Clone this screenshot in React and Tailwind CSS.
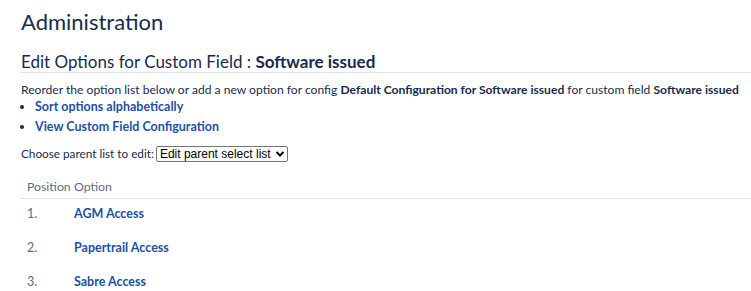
export default function App() {
  const font = { fontFamily: 'Lato, "Open Sans", sans-serif' };
  const rows = ["AGM Access", "Papertrail Access", "Sabre Access"];
  return (
    <div className="w-[751px] h-[291px] overflow-hidden bg-white text-[#172b4d]" style={font}>
      <div className="pl-[20px]">
        <h1 className="pt-[6px] pl-[1px] text-[22px] leading-[32px] font-normal">Administration</h1>
        <h2 className="mt-[13px] pl-[1px] text-[17px] leading-[21px] border-b border-[#dfe1e6] font-normal">
          Edit Options for Custom Field : <b className="font-bold">Software issued</b>
        </h2>
        <p className="mt-[9px] pl-[1px] text-[12.1px] leading-[16px] whitespace-nowrap">
          Reorder the option list below or add a new option for config <b>Default Configuration for Software issued</b> for custom field <b>Software issued</b>
        </p>
        <ul className="-mt-[1px] pl-[15px] text-[12.5px] leading-[20px] font-bold text-[#1e4fa6] list-disc marker:text-[#172b4d]">
          <li><a>Sort options alphabetically</a></li>
          <li><a>View Custom Field Configuration</a></li>
        </ul>
        <div className="mt-[8px] pl-[1px] flex items-center text-[11.75px] leading-[18px]">
          <span>Choose parent list to edit:</span>
          <span
            className="ml-[2px] flex items-center h-[16px] border border-[#767676] rounded-[2px] pl-[3px] pr-[2px] text-[12px] text-black"
            style={{ fontFamily: '"Liberation Sans", Arial, sans-serif' }}
          >
            Edit parent select list
            <svg width="10" height="8" viewBox="0 0 10 8" className="ml-[4px]">
              <path d="M1.5 2 L5 5.5 L8.5 2" fill="none" stroke="#000" strokeWidth="2" />
            </svg>
          </span>
        </div>
        <div className="mt-[15px] flex text-[12.3px] leading-[18px] text-[#5e6c84] pl-[7px] pb-[2px] border-b border-[#dfe1e6]">
          <span className="w-[47px]">Position</span>
          <span>Option</span>
        </div>
        {rows.map((r, i) => (
          <div key={r} className="flex pt-[6px] pb-[10px] leading-[18px] pl-[7px] text-[12.5px]">
            <span className="w-[47px] text-[#5e6c84]">{i + 1}.</span>
            <a className="font-bold text-[12.5px] text-[#1e4fa6]">{r}</a>
          </div>
        ))}
      </div>
    </div>
  );
}
